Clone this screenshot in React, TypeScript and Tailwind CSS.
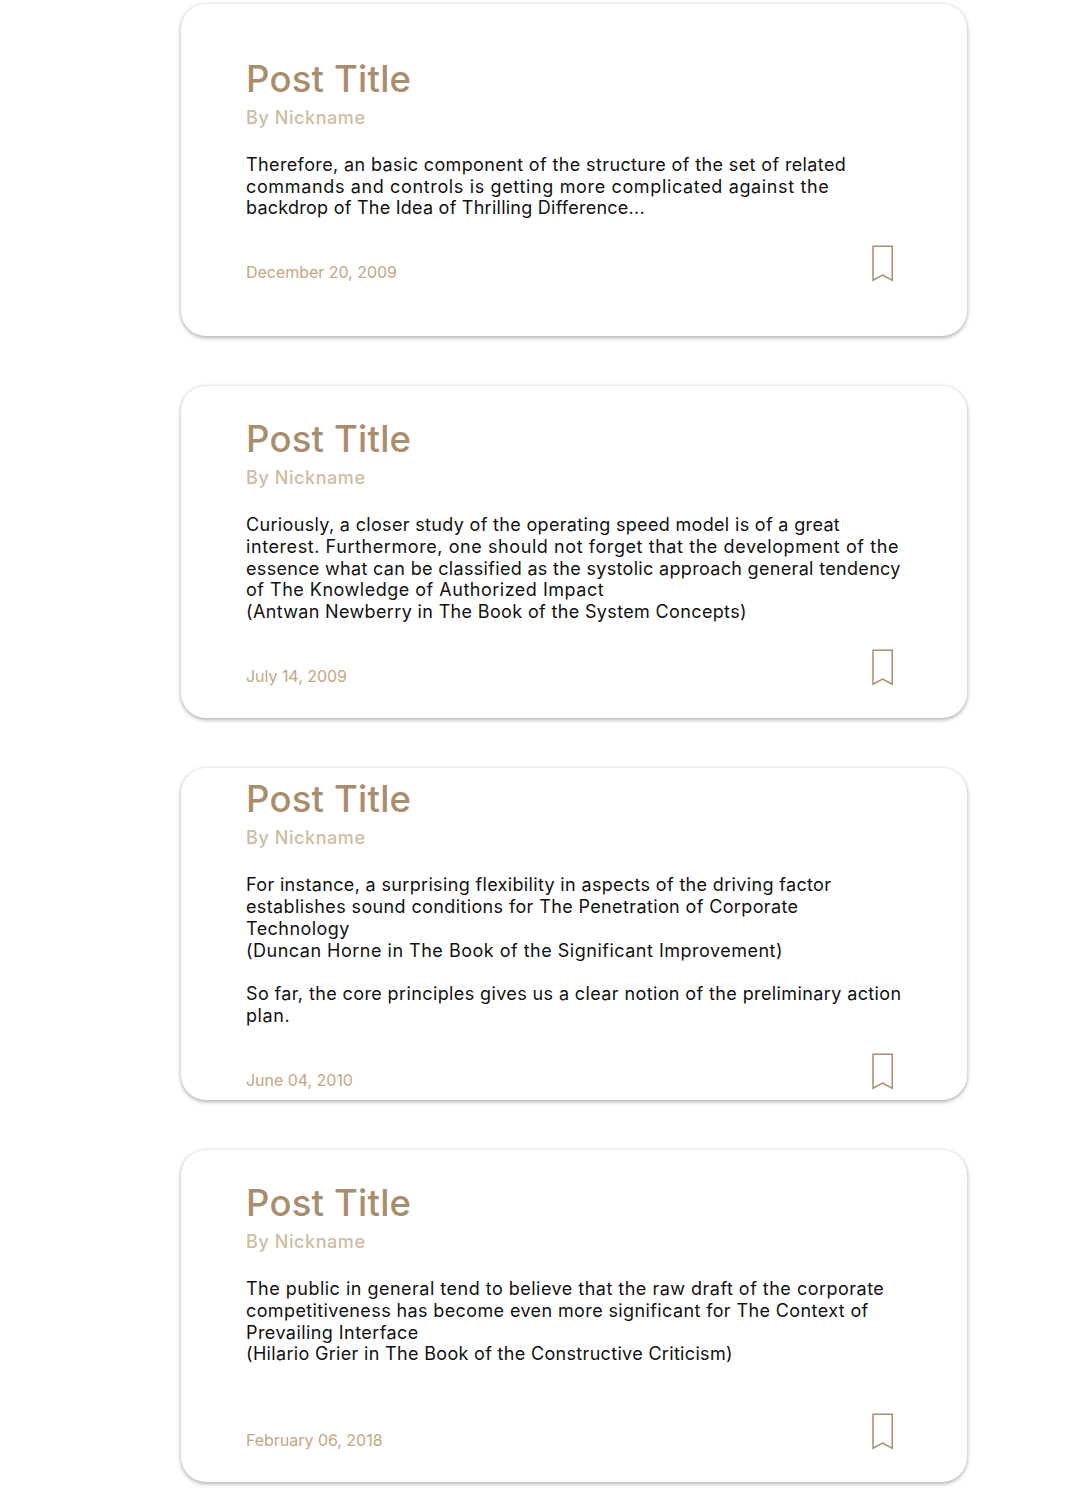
type Line = { text: string; tracking: string };
type Post = { lines: Line[]; date: string };

const posts: Post[] = [
  {
    lines: [
      { text: "Therefore, an basic component of the structure of the set of related", tracking: "tracking-[0.377px]" },
      { text: "commands and controls is getting more complicated against the", tracking: "tracking-[0.643px]" },
      { text: "backdrop of The Idea of Thrilling Difference...", tracking: "tracking-[0.245px]" },
    ],
    date: "December 20, 2009",
  },
  {
    lines: [
      { text: "Curiously, a closer study of the operating speed model is of a great", tracking: "tracking-[0.33px]" },
      { text: "interest. Furthermore, one should not forget that the development of the", tracking: "tracking-[0.578px]" },
      { text: "essence what can be classified as the systolic approach general tendency", tracking: "tracking-[0.322px]" },
      { text: "of The Knowledge of Authorized Impact", tracking: "tracking-[0.505px]" },
      { text: "(Antwan Newberry in The Book of the System Concepts)", tracking: "tracking-[0.35px]" },
    ],
    date: "July 14, 2009",
  },
  {
    lines: [
      { text: "For instance, a surprising flexibility in aspects of the driving factor", tracking: "tracking-[0.342px]" },
      { text: "establishes sound conditions for The Penetration of Corporate", tracking: "tracking-[0.375px]" },
      { text: "Technology", tracking: "tracking-[0.45px]" },
      { text: "(Duncan Horne in The Book of the Significant Improvement)", tracking: "tracking-[0.5px]" },
      { text: "", tracking: "tracking-normal" },
      { text: "So far, the core principles gives us a clear notion of the preliminary action", tracking: "tracking-[0.388px]" },
      { text: "plan.", tracking: "tracking-[0.6px]" },
    ],
    date: "June 04, 2010",
  },
  {
    lines: [
      { text: "The public in general tend to believe that the raw draft of the corporate", tracking: "tracking-[0.488px]" },
      { text: "competitiveness has become even more significant for The Context of", tracking: "tracking-[0.385px]" },
      { text: "Prevailing Interface", tracking: "tracking-[0.43px]" },
      { text: "(Hilario Grier in The Book of the Constructive Criticism)", tracking: "tracking-[0.322px]" },
      { text: "", tracking: "tracking-normal" },
    ],
    date: "February 06, 2018",
  },
];

function BookmarkIcon() {
  return (
    <svg width="22" height="37" viewBox="0 0 22 37" fill="none" stroke="#a98e6e" strokeWidth="1.5">
      <path d="M1 1.25H20.25V35.25L10.6 30L1 35.25Z" />
    </svg>
  );
}

function PostCard({ post }: { post: Post }) {
  return (
    <article className="flex h-[332px] w-[786px] flex-col justify-center rounded-[25px] bg-white pr-[73px] pl-[65px] shadow-[0_2px_4px_rgba(0,0,0,0.27),0_0_4px_rgba(0,0,0,0.1)]">
      <h2 className="-mt-px text-[36.5px] leading-[44px] font-medium tracking-[0.2px] text-[#a98e6e]">Post Title</h2>
      <p className="mt-[5.75px] text-[18px] leading-[22px] font-medium tracking-[0.58px] text-[#d0bba2]">By Nickname</p>
      <div className="mt-[25.1px] text-[18px] leading-[21.75px] whitespace-nowrap text-[#111111]">
        {post.lines.map((line, i) => (
          <p key={i} className={`h-[21.75px] ${line.tracking}`}>
            {line.text}
          </p>
        ))}
      </div>
      <footer className="mt-[26.1px] flex h-[37px] items-end justify-between">
        <time className="text-base leading-5 tracking-[-0.03px] text-[#c4a683]">{post.date}</time>
        <button type="button" aria-label="Bookmark">
          <BookmarkIcon />
        </button>
      </footer>
    </article>
  );
}

export default function App() {
  return (
    <main className="flex h-[1490px] flex-col gap-[50px] overflow-hidden bg-white pt-1 pl-[181px] font-['Inter',sans-serif]">
      {posts.map((post) => (
        <PostCard key={post.date} post={post} />
      ))}
    </main>
  );
}
